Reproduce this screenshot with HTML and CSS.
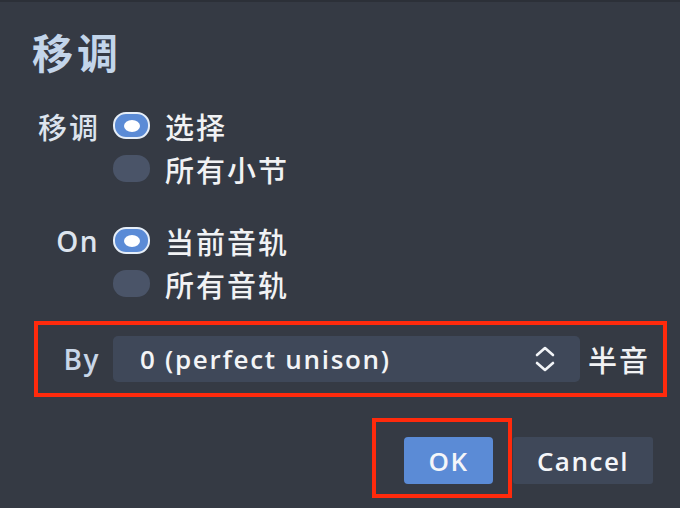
FILE: index.html
```html
<!DOCTYPE html>
<html lang="zh">
<head>
<meta charset="utf-8">
<link rel="stylesheet" href="styles.css">
</head>
<body>
<div class="dialog">
  <div class="title">移调</div>

  <div class="group">
    <div class="row">
      <div class="label cjk">移调</div>
      <span class="radio on"><span class="dot"></span></span>
      <span class="opt">选择</span>
    </div>
    <div class="row">
      <div class="label"></div>
      <span class="radio"></span>
      <span class="opt">所有小节</span>
    </div>
  </div>

  <div class="group second">
    <div class="row">
      <div class="label latin">On</div>
      <span class="radio on"><span class="dot"></span></span>
      <span class="opt">当前音轨</span>
    </div>
    <div class="row">
      <div class="label"></div>
      <span class="radio"></span>
      <span class="opt">所有音轨</span>
    </div>
  </div>

  <div class="hl by-row">
    <div class="by-label latin">By</div>
    <div class="select">
      <span class="select-text">0 (perfect unison)</span>
      <svg class="chev" width="22" height="28" viewBox="0 0 22 28" fill="none" stroke="#f2f4f7" stroke-width="2.6" stroke-linecap="round" stroke-linejoin="round">
        <path d="M3 10 L11 3 L19 10"/>
        <path d="M3 18 L11 25 L19 18"/>
      </svg>
    </div>
    <span class="unit">半音</span>
  </div>

  <div class="buttons">
    <div class="hl ok-wrap">
      <button class="btn ok">OK</button>
    </div>
    <button class="btn cancel">Cancel</button>
  </div>
</div>
</body>
</html>
```

FILE: styles.css
```css
html, body {
  margin: 0;
  padding: 0;
}
body {
  width: 680px;
  height: 508px;
  overflow: hidden;
  background: #353a44;
  font-family: "Noto Sans CJK SC", "Noto Sans", sans-serif;
  color: #eef0f3;
}
.dialog {
  padding-top: 25px;
  border-top: 2px solid #2c3038;
  box-sizing: border-box;
  height: 508px;
}
.title {
  margin-left: 32px;
  font-size: 41px;
  line-height: 48px;
  font-weight: 700;
  color: #c3d5ea;
  letter-spacing: 4px;
}
.group {
  margin-top: 29px;
}
.group.second {
  margin-top: 29px;
}
.row {
  display: flex;
  align-items: center;
  height: 43px;
}
.label {
  width: 100px;
  text-align: right;
  box-sizing: border-box;
  color: #dde4ee;
  font-size: 29px;
  font-weight: 500;
  letter-spacing: 2px;
}
.latin {
  font-family: "Open Sans", "Noto Sans", sans-serif;
  font-size: 28px;
  font-weight: 600;
  letter-spacing: 1.5px;
}
.label.latin {
  padding-right: 1px;
}
.radio {
  margin-left: 13px;
  width: 37px;
  height: 27px;
  border-radius: 13px;
  background: #4a5468;
  box-sizing: border-box;
  display: flex;
  align-items: center;
  justify-content: center;
  flex: none;
}
.radio.on {
  background: #5b8bd6;
  border: 2.5px solid #e6eef8;
}
.dot {
  width: 16px;
  height: 12px;
  border-radius: 50%;
  background: #ffffff;
}
.opt {
  margin-left: 15px;
  font-size: 29px;
  font-weight: 500;
  letter-spacing: 2px;
  color: #f1f2f4;
  line-height: 40px;
}
.hl {
  border: 4px solid #ff2a0c;
  box-sizing: border-box;
}
.by-row {
  margin-top: 16px;
  margin-left: 34px;
  width: 633px;
  height: 76px;
  display: flex;
  align-items: center;
}
.by-label {
  width: 62px;
  text-align: right;
  color: #c8d6e8;
}
.select {
  margin-left: 13px;
  width: 467px;
  height: 46px;
  background: #3f4859;
  border-radius: 5px;
  display: flex;
  align-items: center;
  justify-content: space-between;
  padding: 0 24px 0 27px;
  box-sizing: border-box;
}
.select-text {
  font-family: "Open Sans", "Noto Sans", sans-serif;
  font-size: 26px;
  font-weight: 600;
  color: #f3f4f6;
  letter-spacing: 1.7px;
}
.chev {
  display: block;
}
.unit {
  margin-left: 8px;
  font-size: 29px;
  font-weight: 500;
  letter-spacing: 2px;
  color: #f1f2f4;
}
.buttons {
  margin-top: 21px;
  padding-right: 27px;
  display: flex;
  justify-content: flex-end;
  align-items: flex-start;
}
.ok-wrap {
  width: 140px;
  height: 80px;
  padding: 15px 0 0 28px;
}
.btn {
  font-family: "Open Sans", "Noto Sans", sans-serif;
  font-size: 26px;
  font-weight: 600;
  letter-spacing: 1.5px;
  color: #f4f6f9;
  border: none;
  border-radius: 4px;
  height: 47px;
  padding: 0;
  margin: 0;
}
.ok {
  width: 89px;
  background: #5b8bd6;
}
.cancel {
  margin-left: 1px;
  margin-top: 19px;
  width: 140px;
  background: #3f4859;
  border-radius: 3px;
}
```
